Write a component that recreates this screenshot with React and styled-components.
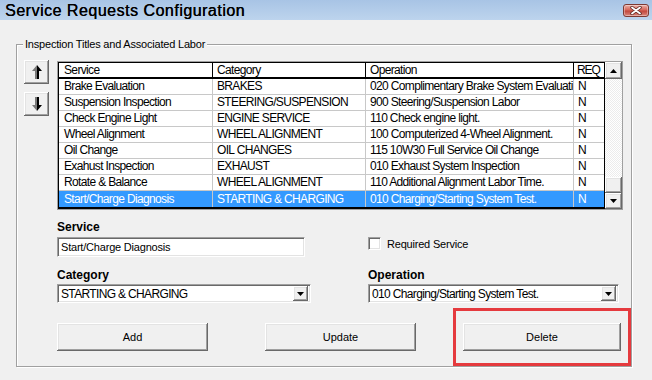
import React from 'react';
import styled, { createGlobalStyle } from 'styled-components';

const GlobalStyle = createGlobalStyle`
  html, body {
    margin: 0;
    padding: 0;
    background: #f0f0f0;
  }
  body {
    font-family: "Liberation Sans", Arial, sans-serif;
    color: #000;
  }
  * { box-sizing: border-box; }
`;

const Window = styled.div`
  width: 652px;
  height: 380px;
  display: flex;
  flex-direction: column;
  overflow: hidden;
  background: #f0f0f0;
`;

const TitleBar = styled.div`
  height: 20px;
  flex: none;
  display: flex;
  align-items: center;
  justify-content: space-between;
  padding: 0 3px 0 5px;
  background: linear-gradient(#a8c4e5, #bdd4ed);
`;

const Title = styled.div`
  font-size: 16px;
  letter-spacing: 0.5px;
  line-height: 20px;
  margin-top: 1px;
  text-shadow: 0.3px 0 0 #000;
`;

const CloseButton = styled.div`
  width: 26px;
  height: 13px;
  margin-top: 1px;
  border: 1px solid #7d3a33;
  border-radius: 3px;
  display: flex;
  align-items: center;
  justify-content: center;
  background: linear-gradient(#eab1a8, #d7675a 45%, #c2473c 55%, #d9867b);
  box-shadow: inset 0 0 0 1px rgba(255, 255, 255, 0.35);
`;

const Body = styled.div`
  flex: 1;
  padding: 24px 0 0 16px;
`;

const GroupBox = styled.div`
  position: relative;
  width: 616px;
  height: 323px;
  border: 1px solid #a0a0a0;
  box-shadow: inset 1px 1px 0 #fff, 1px 1px 0 #fff;
  padding: 15px 0 0 7px;
`;

const Legend = styled.span`
  position: absolute;
  top: -7px;
  left: 6px;
  padding: 0 2px;
  background: #f0f0f0;
  font-size: 11px;
  letter-spacing: -0.2px;
  line-height: 13px;
`;

const TopRow = styled.div`
  display: flex;
  gap: 8px;
`;

const ArrowColumn = styled.div`
  display: flex;
  flex-direction: column;
  gap: 8px;
`;

const raised = `
  background: #f0f0f0;
  box-shadow: inset -1px -1px 0 #696969, inset 1px 1px 0 #fff,
    inset -2px -2px 0 #a0a0a0, inset 2px 2px 0 #e3e3e3;
`;

const MoveButton = styled.div`
  width: 25px;
  height: 24px;
  display: flex;
  align-items: center;
  justify-content: center;
  ${raised}
`;

const TableFrame = styled.div`
  margin-top: 1px;
  display: flex;
  border: 1px solid #a0a0a0;
  background: #f0f0f0;
`;

const GridBox = styled.div`
  width: 547px;
  border: 1px solid #000;
  border-bottom-width: 2px;
  background: #fff;
`;

const Grid = styled.table`
  width: 545px;
  table-layout: fixed;
  border-collapse: separate;
  border-spacing: 0;
  font-size: 12px;
  letter-spacing: -0.65px;
`;

const HeadCell = styled.th`
  height: 16px;
  padding: 0 0 0 ${(p) => (p.$first ? 5 : p.$last ? 3 : 4)}px;
  text-align: left;
  font-weight: normal;
  line-height: 14px;
  white-space: nowrap;
  overflow: hidden;
  letter-spacing: ${(p) => (p.$last ? '-1.1px' : 'inherit')};
  border-bottom: 2px solid #000;
  border-right: ${(p) => (p.$last ? 'none' : '1px solid #000')};
`;

const Row = styled.tr`
  background: ${(p) => (p.$selected ? '#3399ff' : '#fff')};
  color: ${(p) => (p.$selected ? '#fff' : '#000')};
`;

const Cell = styled.td`
  height: 16px;
  padding: 0 0 0 ${(p) => (p.$first ? 5 : 4)}px;
  line-height: 15px;
  white-space: nowrap;
  overflow: hidden;
  border-bottom: ${(p) => (p.$lastRow ? 'none' : '1px solid #c8c8c8')};
  border-right: ${(p) => (p.$last ? 'none' : '1px solid #c8c8c8')};
`;

const Scrollbar = styled.div`
  width: 17px;
  display: flex;
  flex-direction: column;
`;

const ScrollButton = styled.div`
  width: 17px;
  height: ${(p) => p.$h}px;
  display: flex;
  align-items: center;
  justify-content: center;
  ${raised}
`;

const Track = styled.div`
  flex: 1;
  display: flex;
  flex-direction: column;
  justify-content: flex-end;
  background-color: #f0f0f0;
  background-image: repeating-conic-gradient(#fff 0 25%, #ececec 0 50%);
  background-size: 2px 2px;
`;

const Thumb = styled.div`
  height: 16px;
  ${raised}
`;

const Form = styled.div`
  padding-left: 33px;
  margin-top: 10px;
`;

const FormRow = styled.div`
  display: flex;
  margin-top: ${(p) => p.$gap || 0}px;
`;

const Field = styled.div`
  width: ${(p) => p.$w}px;
  margin-left: ${(p) => p.$ml || 0}px;
  display: flex;
  flex-direction: column;
`;

const FieldLabel = styled.div`
  font-size: 12px;
  font-weight: bold;
  line-height: 14px;
  height: 14px;
  margin-bottom: ${(p) => p.$mb}px;
`;

const sunken = `
  background: #fff;
  border: 1px solid;
  border-color: #a0a0a0 #fff #fff #a0a0a0;
  box-shadow: inset 1px 1px 0 #696969, inset -1px -1px 0 #e3e3e3;
`;

const TextBox = styled.div`
  width: 248px;
  height: 20px;
  padding: 0 3px;
  font-size: 11px;
  letter-spacing: -0.2px;
  line-height: 18px;
  ${sunken}
`;

const Select = styled.div`
  width: ${(p) => p.$w}px;
  height: 19px;
  display: flex;
  align-items: center;
  justify-content: space-between;
  padding: 0 2px 0 3px;
  font-size: 12px;
  letter-spacing: -0.65px;
  ${sunken}
`;

const DropButton = styled.div`
  width: 15px;
  height: 15px;
  display: flex;
  align-items: center;
  justify-content: center;
  ${raised}
`;

const CheckRow = styled.label`
  margin-left: 57px;
  margin-top: 17px;
  display: flex;
  align-items: center;
  gap: 6px;
  height: 13px;
  font-size: 11px;
  letter-spacing: -0.2px;
`;

const CheckBox = styled.span`
  width: 13px;
  height: 13px;
  ${sunken}
`;

const ButtonRow = styled.div`
  display: flex;
  align-items: center;
  margin-top: 5px;
`;

const PushButton = styled.div`
  width: ${(p) => p.$w}px;
  height: 28px;
  margin-left: ${(p) => p.$ml || 0}px;
  display: flex;
  align-items: center;
  justify-content: center;
  font-size: 11px;
  font-weight: normal;
  ${raised}
`;

const Highlight = styled.div`
  height: 58px;
  margin-left: 37px;
  padding: 0 7px;
  display: flex;
  align-items: center;
  border: 3px solid #e53a3e;
`;

const rows = [
  ['Brake Evaluation', 'BRAKES', '020 Complimentary Brake System Evaluation', 'N'],
  ['Suspension Inspection', 'STEERING/SUSPENSION', '900 Steering/Suspension Labor', 'N'],
  ['Check Engine Light', 'ENGINE SERVICE', '110 Check engine light.', 'N'],
  ['Wheel Alignment', 'WHEEL ALIGNMENT', '100 Computerized 4-Wheel Alignment.', 'N'],
  ['Oil Change', 'OIL CHANGES', '115 10W30 Full Service Oil Change', 'N'],
  ['Exahust Inspection', 'EXHAUST', '010 Exhaust System Inspection', 'N'],
  ['Rotate & Balance', 'WHEEL ALIGNMENT', '110 Additional Alignment Labor Time.', 'N'],
  ['Start/Charge Diagnosis', 'STARTING & CHARGING', '010 Charging/Starting System Test.', 'N'],
];

const selectedIndex = 7;

function MoveArrow({ down }) {
  return (
    <svg width="10" height="14" viewBox="0 0 10 14" style={down ? { transform: 'scaleY(-1)' } : undefined}>
      <polygon points="5,0 0,6 3,6 3,14 5,14" fill="#7a7a7a" />
      <polygon points="5,0 10,6 7,6 7,14 5,14" fill="#000" />
    </svg>
  );
}

function Triangle({ down }) {
  return (
    <svg width="7" height="4" viewBox="0 0 7 4">
      <polygon points={down ? '0,0 7,0 3.5,4' : '0,4 7,4 3.5,0'} fill="#000" />
    </svg>
  );
}

export default function App() {
  return (
    <Window>
      <GlobalStyle />
      <TitleBar>
        <Title>Service Requests Configuration</Title>
        <CloseButton>
          <svg width="12" height="9" viewBox="0 0 12 9">
            <path d="M2 1.5 L10 7.5 M10 1.5 L2 7.5" stroke="#5b2520" strokeWidth="3.4" strokeLinecap="round" />
            <path d="M2 1.5 L10 7.5 M10 1.5 L2 7.5" stroke="#fff" strokeWidth="1.8" strokeLinecap="round" />
          </svg>
        </CloseButton>
      </TitleBar>
      <Body>
        <GroupBox>
          <Legend>Inspection Titles and Associated Labor</Legend>
          <TopRow>
            <ArrowColumn>
              <MoveButton><MoveArrow /></MoveButton>
              <MoveButton><MoveArrow down /></MoveButton>
            </ArrowColumn>
            <TableFrame>
              <GridBox>
                <Grid>
                  <colgroup>
                    <col style={{ width: 154 }} />
                    <col style={{ width: 153 }} />
                    <col style={{ width: 208 }} />
                    <col style={{ width: 30 }} />
                  </colgroup>
                  <thead>
                    <tr>
                      <HeadCell $first>Service</HeadCell>
                      <HeadCell>Category</HeadCell>
                      <HeadCell>Operation</HeadCell>
                      <HeadCell $last>REQ</HeadCell>
                    </tr>
                  </thead>
                  <tbody>
                    {rows.map((r, i) => (
                      <Row key={i} $selected={i === selectedIndex}>
                        {r.map((v, j) => (
                          <Cell key={j} $first={j === 0} $last={j === 3} $lastRow={i === rows.length - 1}>
                            {v}
                          </Cell>
                        ))}
                      </Row>
                    ))}
                  </tbody>
                </Grid>
              </GridBox>
              <Scrollbar>
                <ScrollButton $h={17}><Triangle /></ScrollButton>
                <Track><Thumb /></Track>
                <ScrollButton $h={16}><Triangle down /></ScrollButton>
              </Scrollbar>
            </TableFrame>
          </TopRow>

          <Form>
            <FormRow>
              <Field $w={254}>
                <FieldLabel $mb={3}>Service</FieldLabel>
                <TextBox>Start/Charge Diagnosis</TextBox>
              </Field>
              <CheckRow>
                <CheckBox />
                Required Service
              </CheckRow>
            </FormRow>
            <FormRow $gap={11}>
              <Field $w={254}>
                <FieldLabel $mb={2}>Category</FieldLabel>
                <Select $w={254}>
                  STARTING &amp; CHARGING
                  <DropButton><Triangle down /></DropButton>
                </Select>
              </Field>
              <Field $w={251} $ml={57}>
                <FieldLabel $mb={2}>Operation</FieldLabel>
                <Select $w={251}>
                  010 Charging/Starting System Test.
                  <DropButton><Triangle down /></DropButton>
                </Select>
              </Field>
            </FormRow>
            <ButtonRow>
              <PushButton $w={152}>Add</PushButton>
              <PushButton $w={152} $ml={57}>Update</PushButton>
              <Highlight>
                <PushButton $w={158}>Delete</PushButton>
              </Highlight>
            </ButtonRow>
          </Form>
        </GroupBox>
      </Body>
    </Window>
  );
}
